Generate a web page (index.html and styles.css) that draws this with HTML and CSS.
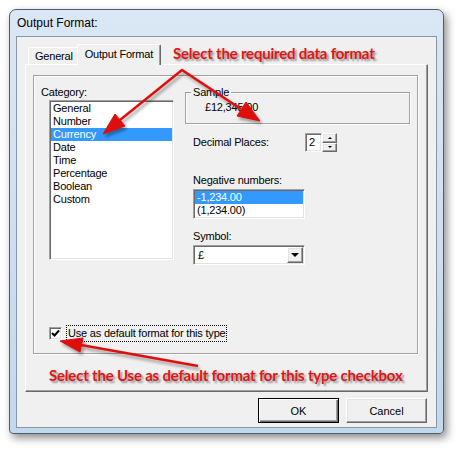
FILE: index.html
```html
<!DOCTYPE html>
<html lang="en">
<head>
    <meta charset="UTF-8">
    <title>Output Format</title>
    <link rel="stylesheet" href="styles.css">
</head>
<body>
    <div class="page">
        <div class="window">
            <div class="titlebar">Output Format:</div>
            <div class="client">
                <!-- Tabs -->
                <div class="tabs">
                    <div class="tab">General</div>
                    <div class="tab active">Output Format</div>
                </div>
                <div class="panel">
                    <div class="group">
                        <div class="columns">
                            <div class="col-left">
                                <div class="label">Category:</div>
                                <ul class="listbox sunken category">
                                    <li>General</li>
                                    <li>Number</li>
                                    <li class="selected">Currency</li>
                                    <li>Date</li>
                                    <li>Time</li>
                                    <li>Percentage</li>
                                    <li>Boolean</li>
                                    <li>Custom</li>
                                </ul>
                            </div>
                            <div class="col-right">
                                <div class="sample">
                                    <div class="sample-title">Sample</div>
                                    <div class="sample-value">£12,345.00</div>
                                </div>
                                <div class="field decimal-row">
                                    <span class="label">Decimal Places:</span>
                                    <div class="spinner">
                                        <div class="edit sunken">2</div>
                                        <div class="spin-buttons">
                                            <div class="spin raised up"></div>
                                            <div class="spin raised down"></div>
                                        </div>
                                    </div>
                                </div>
                                <div class="field">
                                    <div class="label neg-label">Negative numbers:</div>
                                    <ul class="listbox sunken negative">
                                        <li class="selected">-1,234.00</li>
                                        <li>(1,234.00)</li>
                                    </ul>
                                    <div class="label symbol-label">Symbol:</div>
                                    <div class="combo sunken">
                                        <span>£</span>
                                        <div class="drop raised"></div>
                                    </div>
                                </div>
                            </div>
                        </div>
                        <div class="check-row">
                            <span class="checkbox sunken">
                                <svg width="9" height="9" viewBox="0 0 9 9"><path d="M1 4 L3.5 6.5 L8 1.5" fill="none" stroke="#000" stroke-width="2"/></svg>
                            </span>
                            <span class="check-label">Use as default format for this type</span>
                        </div>
                    </div>
                </div>
                <div class="buttons">
                    <button class="btn default">OK</button>
                    <button class="btn raised">Cancel</button>
                </div>
            </div>
        </div>

        <!-- Annotations drawn over the dialog -->
        <div class="notes">
            <svg class="arrows" width="459" height="457" viewBox="0 0 459 457">
                <defs>
                    <filter id="shadow" x="-20%" y="-20%" width="140%" height="140%">
                        <feDropShadow dx="2" dy="3" stdDeviation="1.5" flood-color="#000" flood-opacity="0.35"/>
                    </filter>
                </defs>
                <g filter="url(#shadow)" fill="#e00b0b" stroke="#e00b0b" stroke-linejoin="round">
                    <polyline points="120,120 182,70 241,109" fill="none" stroke-width="2.5"/>
                    <polygon points="103,134 125,126 115,114" stroke-width="1"/>
                    <polygon points="260,121 237,116 246,102" stroke-width="1"/>
                    <line x1="198" y1="366" x2="81" y2="345" stroke-width="2.5"/>
                    <polygon points="60,341 83,338 80,352" stroke-width="1"/>
                </g>
            </svg>
            <div class="note note-top">Select the required data format</div>
            <div class="note note-bottom">Select the Use as default format for this type checkbox</div>
        </div>
    </div>
</body>
</html>
```

FILE: styles.css
```css
/* Page */
body {
    margin: 0;
    background: #fff;
    font-family: "Liberation Sans", Arial, sans-serif;
    font-size: 11px;
    letter-spacing: -0.2px;
    color: #000;
}

.page {
    position: relative;
    width: 459px;
    height: 457px;
    overflow: hidden;
}

/* Window frame */
.window {
    margin: 9px 0 0 9px;
    width: 435px;
    height: 425px;
    box-sizing: border-box;
    border: 1px solid #4d5d6d;
    border-radius: 7px 7px 4px 4px;
    background: linear-gradient(#dae7f4, #c2d8ed);
    box-shadow: 3px 4px 9px rgba(0, 0, 0, 0.45);
    display: flex;
    flex-direction: column;
}

.titlebar {
    height: 26px;
    display: flex;
    align-items: center;
    padding-left: 7px;
    font-size: 12px;
    letter-spacing: 0;
}

.client {
    flex: 1;
    margin: 0 6px 5px;
    border: 1px solid #8797a8;
    background: #f0f0f0;
    padding: 0 8px;
    display: flex;
    flex-direction: column;
}

/* 3D edges */
.sunken {
    border: 1px solid;
    border-color: #a0a0a0 #fff #fff #a0a0a0;
    box-shadow: inset 1px 1px 0 #696969, inset -1px -1px 0 #e3e3e3;
    background: #fff;
}

.raised {
    border: 1px solid;
    border-color: #fff #696969 #696969 #fff;
    box-shadow: inset -1px -1px 0 #a0a0a0, inset 1px 1px 0 #e3e3e3;
    background: #f0f0f0;
}

/* Tabs */
.tabs {
    height: 27px;
    display: flex;
    align-items: flex-end;
    padding-left: 3px;
}

.tab {
    height: 17px;
    box-sizing: border-box;
    padding: 0 6px;
    border: 1px solid;
    border-color: #fff #696969 transparent #fff;
    border-bottom: none;
    border-radius: 2px 2px 0 0;
    box-shadow: inset -1px 0 0 #a0a0a0;
    display: flex;
    align-items: center;
}

.tab.active {
    height: 21px;
    margin: 0 0 -1px -3px;
    padding: 0 7px 2px;
    position: relative;
    z-index: 1;
    background: #f0f0f0;
}

.panel {
    height: 328px;
    box-sizing: border-box;
    border: 1px solid;
    border-color: #fff #696969 #696969 #fff;
    box-shadow: inset -1px -1px 0 #a0a0a0;
    padding: 10px 0 0 7px;
}

.group {
    width: 385px;
    height: 279px;
    box-sizing: border-box;
    border: 1px solid #a0a0a0;
    box-shadow: inset 1px 1px 0 #fff, 1px 1px 0 #fff;
    display: flex;
    flex-direction: column;
}

.columns {
    display: flex;
}

.label {
    line-height: 13px;
}

/* Category list */
.col-left {
    width: 151px;
    padding-top: 10px;
}

.col-left .label {
    padding-left: 7px;
}

.listbox {
    list-style: none;
    margin: 0;
    padding: 1px;
    box-sizing: border-box;
}

.listbox li {
    height: 13px;
    line-height: 13px;
    padding-left: 2px;
    white-space: nowrap;
}

.listbox li.selected {
    background: #3399ff;
    color: #fff;
}

.category {
    margin: 1px 0 0 15px;
    width: 125px;
    height: 160px;
}

/* Right column */
.col-right {
    flex: 1;
}

.field {
    padding-left: 8px;
}

.sample {
    margin-top: 16px;
    width: 225px;
    height: 32px;
    box-sizing: border-box;
    border: 1px solid #a0a0a0;
    box-shadow: inset 1px 1px 0 #fff, 1px 1px 0 #fff;
    padding-left: 5px;
}

.sample-title {
    width: fit-content;
    margin-top: -7px;
    padding: 0 2px;
    background: #f0f0f0;
    line-height: 13px;
}

.sample-value {
    margin: 2px 0 0 14px;
    line-height: 13px;
}

.decimal-row {
    margin-top: 9px;
    height: 19px;
    display: flex;
    align-items: center;
}

.decimal-row .label {
    width: 112px;
}

.spinner {
    display: flex;
    height: 19px;
}

.edit {
    width: 17px;
    height: 19px;
    box-sizing: border-box;
    padding-left: 3px;
    line-height: 17px;
}

.spin-buttons {
    width: 15px;
    display: flex;
    flex-direction: column;
}

.spin {
    flex: 1;
    display: flex;
    align-items: center;
    justify-content: center;
}

.spin::after {
    content: "";
    border-left: 2px solid transparent;
    border-right: 2px solid transparent;
}

.spin.up::after {
    border-bottom: 2px solid #000;
}

.spin.down::after {
    border-top: 2px solid #000;
}

.neg-label {
    margin-top: 22px;
}

.negative {
    margin-top: 2px;
    width: 112px;
    height: 30px;
}

.symbol-label {
    margin-top: 11px;
}

.combo {
    margin-top: 2px;
    width: 112px;
    height: 20px;
    box-sizing: border-box;
    padding: 0 1px 0 4px;
    display: flex;
    align-items: center;
    justify-content: space-between;
}

.drop {
    width: 16px;
    height: 16px;
    box-sizing: border-box;
    display: flex;
    align-items: center;
    justify-content: center;
}

.drop::after {
    content: "";
    border-left: 4px solid transparent;
    border-right: 4px solid transparent;
    border-top: 4px solid #000;
}

/* Checkbox */
.check-row {
    margin: auto 0 11px 15px;
    height: 17px;
    display: flex;
    align-items: center;
}

.checkbox {
    width: 13px;
    height: 13px;
    box-sizing: border-box;
    display: flex;
    align-items: center;
    justify-content: center;
}

.check-label {
    margin-left: 4px;
    border: 1px dotted #000;
    padding: 0 1px;
    line-height: 15px;
}

/* Buttons */
.buttons {
    display: flex;
    justify-content: flex-end;
    gap: 7px;
    margin-top: 6px;
    padding-right: 1px;
}

.btn {
    width: 81px;
    height: 25px;
    padding: 0;
    font: inherit;
    letter-spacing: 0;
    color: #000;
}

.btn.default {
    border: 1px solid #000;
    background: #f0f0f0;
    box-shadow: inset 1px 1px 0 #fff, inset -1px -1px 0 #696969, inset -2px -2px 0 #a0a0a0;
}

/* Annotations */
.notes {
    position: absolute;
    inset: 0;
    pointer-events: none;
}

.arrows {
    position: absolute;
    left: 0;
    top: 0;
}

.note {
    position: absolute;
    font-family: Lato, "Liberation Sans", sans-serif;
    font-weight: 700;
    font-size: 15px;
    line-height: 18px;
    letter-spacing: -0.2px;
    color: #e21414;
    text-shadow: 2px 2px 2px rgba(0, 0, 0, 0.4);
    white-space: nowrap;
}

.note-top {
    left: 173px;
    top: 44px;
}

.note-bottom {
    left: 49px;
    top: 366px;
}
```
